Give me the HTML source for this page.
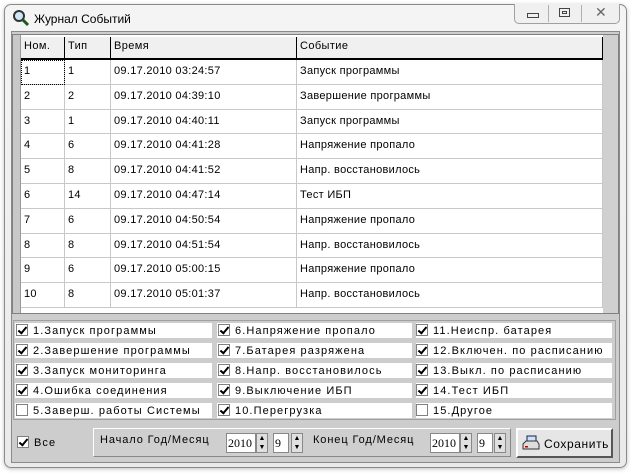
<!DOCTYPE html>
<html><head><meta charset="utf-8"><style>
*{box-sizing:border-box;margin:0;padding:0}
body{width:631px;height:475px;background:#fff;font-family:"Liberation Sans",sans-serif;font-size:11px;color:#000;position:relative;overflow:hidden}
.abs{position:absolute}
.win{left:4px;top:4px;width:623px;height:464px;border:1px solid #8a8a8a;border-radius:7px;background:linear-gradient(#f4f4f4,#eaeaea);box-shadow:0 1px 4px rgba(0,0,0,.25)}
.client{left:11px;top:31px;width:609px;height:432px;background:#cdcdcd;border:1px solid #8a8a8a}
.title{left:34px;top:12px;font-size:12px;color:#000}
.btns{left:514px;top:4px;width:106px;height:20px;border:1px solid #a0a0a0;border-top:none;border-radius:0 0 5px 5px;background:#f0f0f0}
.grid{left:12px;top:34px;width:607px;height:280px;border:1px solid #808080;background:#fff}
.lbar{left:13px;top:35px;width:8px;height:278px;background:#c8c8c8;border-right:1px solid #999}
.rbar{left:603px;top:35px;width:15px;height:278px;background:#d0d0d0}
.hdr{top:37px;height:23px;background:#f0f0f0;border-right:1px solid #000;border-bottom:2px solid #000;padding:3px 0 0 3px;letter-spacing:.4px}
.cell{height:24.8px;border-right:1px solid #c8c8c8;border-bottom:1px solid #c8c8c8;padding:5px 0 0 3px;white-space:nowrap;letter-spacing:.3px}
.strip{height:15px;background:#fff}
.cb{width:12px;height:12px;border:1px solid #808080;background:#fff;display:inline-block;vertical-align:-2px;position:relative;margin-right:5px}
.cb.on::after{content:"";position:absolute;left:3px;top:0px;width:3px;height:7px;border:solid #000;border-width:0 2px 2px 0;transform:rotate(40deg)}
.lbl{letter-spacing:1.1px}
.spin{border:1px solid #888;background:#fff;height:20px;font-family:"Liberation Serif",serif;font-size:12px;padding:2px 1px}
.sb{width:12px;height:20px;background:#e0e0e0;border:1px solid #888}
</style></head><body>
<div class="abs win"></div>
<svg class="abs" style="left:12px;top:9px" width="18" height="18" viewBox="0 0 18 18"><circle cx="7" cy="7" r="5" fill="#cfe6f5" stroke="#333" stroke-width="2"/><line x1="10.5" y1="10.5" x2="16" y2="16" stroke="#1a5a1a" stroke-width="3"/></svg>
<div class="abs title">Журнал Событий</div>
<div class="abs btns">
<div class="abs" style="left:12px;top:9px;width:12px;height:5px;border:1px solid #444"></div>
<div class="abs" style="left:33px;top:1px;width:1px;height:17px;background:#b0b0b0"></div>
<div class="abs" style="left:44px;top:4px;width:11px;height:9px;border:1px solid #444"><div style="margin:2px;height:3px;border:1px solid #444"></div></div>
<div class="abs" style="left:66px;top:1px;width:1px;height:17px;background:#b0b0b0"></div>
<div class="abs" style="left:80px;top:0px;font-size:14px;color:#666">✕</div>
</div>
<div class="abs client"></div>
<div class="abs grid"></div>
<div class="abs lbar"></div>
<div class="abs rbar"></div>
<div class="abs hdr" style="left:21px;width:44px">Ном.</div>
<div class="abs hdr" style="left:65px;width:46px">Тип</div>
<div class="abs hdr" style="left:111px;width:186px">Время</div>
<div class="abs hdr" style="left:297px;width:306px">Событие</div>
<div class="abs" style="left:21px;top:60px;width:582px">
<div style="display:flex"><div style="width:44px"><div class="cell" style="outline:1px dotted #000;outline-offset:-1px">1</div><div class="cell">2</div><div class="cell">3</div><div class="cell">4</div><div class="cell">5</div><div class="cell">6</div><div class="cell">7</div><div class="cell">8</div><div class="cell">9</div><div class="cell">10</div></div>
<div style="width:46px"><div class="cell">1</div><div class="cell">2</div><div class="cell">1</div><div class="cell">6</div><div class="cell">8</div><div class="cell">14</div><div class="cell">6</div><div class="cell">8</div><div class="cell">6</div><div class="cell">8</div></div>
<div style="width:186px"><div class="cell">09.17.2010 03:24:57</div><div class="cell">09.17.2010 04:39:10</div><div class="cell">09.17.2010 04:40:11</div><div class="cell">09.17.2010 04:41:28</div><div class="cell">09.17.2010 04:41:52</div><div class="cell">09.17.2010 04:47:14</div><div class="cell">09.17.2010 04:50:54</div><div class="cell">09.17.2010 04:51:54</div><div class="cell">09.17.2010 05:00:15</div><div class="cell">09.17.2010 05:01:37</div></div>
<div style="width:306px"><div class="cell">Запуск программы</div><div class="cell">Завершение программы</div><div class="cell">Запуск программы</div><div class="cell">Напряжение пропало</div><div class="cell">Напр. восстановилось</div><div class="cell">Тест ИБП</div><div class="cell">Напряжение пропало</div><div class="cell">Напр. восстановилось</div><div class="cell">Напряжение пропало</div><div class="cell">Напр. восстановилось</div></div>
</div></div>

<div class="abs" style="left:13px;top:320px;width:603px;height:100px;border:1px solid #a0a0a0"></div>
<div class="abs strip" style="left:15px;top:323px;width:197px"></div><div class="abs strip" style="left:217px;top:323px;width:195px"></div><div class="abs strip" style="left:416px;top:323px;width:196px"></div>
<div class="abs strip" style="left:15px;top:343px;width:197px"></div><div class="abs strip" style="left:217px;top:343px;width:195px"></div><div class="abs strip" style="left:416px;top:343px;width:196px"></div>
<div class="abs strip" style="left:15px;top:363px;width:197px"></div><div class="abs strip" style="left:217px;top:363px;width:195px"></div><div class="abs strip" style="left:416px;top:363px;width:196px"></div>
<div class="abs strip" style="left:15px;top:383px;width:197px"></div><div class="abs strip" style="left:217px;top:383px;width:195px"></div><div class="abs strip" style="left:416px;top:383px;width:196px"></div>
<div class="abs strip" style="left:15px;top:403px;width:197px"></div><div class="abs strip" style="left:217px;top:403px;width:195px"></div><div class="abs strip" style="left:416px;top:403px;width:196px"></div>

<div class="abs" style="left:16px;top:321px;line-height:20px;white-space:nowrap">
<div><span class="cb on"></span><span class="lbl">1.Запуск программы</span></div>
<div><span class="cb on"></span><span class="lbl">2.Завершение программы</span></div>
<div><span class="cb on"></span><span class="lbl">3.Запуск мониторинга</span></div>
<div><span class="cb on"></span><span class="lbl">4.Ошибка соединения</span></div>
<div><span class="cb"></span><span class="lbl">5.Заверш. работы Системы</span></div>
</div>
<div class="abs" style="left:218px;top:321px;line-height:20px;white-space:nowrap">
<div><span class="cb on"></span><span class="lbl">6.Напряжение пропало</span></div>
<div><span class="cb on"></span><span class="lbl">7.Батарея разряжена</span></div>
<div><span class="cb on"></span><span class="lbl">8.Напр. восстановилось</span></div>
<div><span class="cb on"></span><span class="lbl">9.Выключение ИБП</span></div>
<div><span class="cb on"></span><span class="lbl">10.Перегрузка</span></div>
</div>
<div class="abs" style="left:416px;top:321px;line-height:20px;white-space:nowrap">
<div><span class="cb on"></span><span class="lbl">11.Неиспр. батарея</span></div>
<div><span class="cb on"></span><span class="lbl">12.Включен. по расписанию</span></div>
<div><span class="cb on"></span><span class="lbl">13.Выкл. по расписанию</span></div>
<div><span class="cb on"></span><span class="lbl">14.Тест ИБП</span></div>
<div><span class="cb"></span><span class="lbl">15.Другое</span></div>
</div>

<div class="abs" style="left:17px;top:436px"><span class="cb on"></span><span class="lbl">Все</span></div>
<div class="abs" style="left:93px;top:428px;width:418px;height:29px;border:1px solid;border-color:#fff #888 #888 #fff;background:#cfcfcf"></div>
<div class="abs lbl" style="left:100px;top:434px;letter-spacing:.9px">Начало Год/Месяц</div>
<div class="abs spin" style="left:226px;top:433px;width:30px;color:#000">2010</div>
<div class="abs sb" style="left:256px;top:433px;font-size:7px;line-height:9px;text-align:center">▲<br>▼</div>
<div class="abs spin" style="left:273px;top:433px;width:16px">9</div>
<div class="abs sb" style="left:291px;top:433px;font-size:7px;line-height:9px;text-align:center">▲<br>▼</div>
<div class="abs lbl" style="left:313px;top:434px;letter-spacing:.9px">Конец Год/Месяц</div>
<div class="abs spin" style="left:430px;top:433px;width:30px">2010</div>
<div class="abs sb" style="left:460px;top:433px;font-size:7px;line-height:9px;text-align:center">▲<br>▼</div>
<div class="abs spin" style="left:477px;top:433px;width:16px">9</div>
<div class="abs sb" style="left:494px;top:433px;font-size:7px;line-height:9px;text-align:center">▲<br>▼</div>
<div class="abs" style="left:516px;top:428px;width:97px;height:30px;border:2px solid;border-color:#fff #555 #555 #fff;background:#e6e6e6"></div>
<svg class="abs" style="left:521px;top:434px" width="20" height="18" viewBox="0 0 20 18"><rect x="6" y="2" width="9" height="6" fill="#cfe0ff" stroke="#124" /><path d="M2 10 L5 7 H16 L18 10 V15 H2Z" fill="#ddd" stroke="#333"/><rect x="4" y="12" width="3" height="1.5" fill="#c00"/></svg>
<div class="abs lbl" style="left:544px;top:437px;font-size:12px;letter-spacing:.6px">Сохранить</div>
</body></html>
